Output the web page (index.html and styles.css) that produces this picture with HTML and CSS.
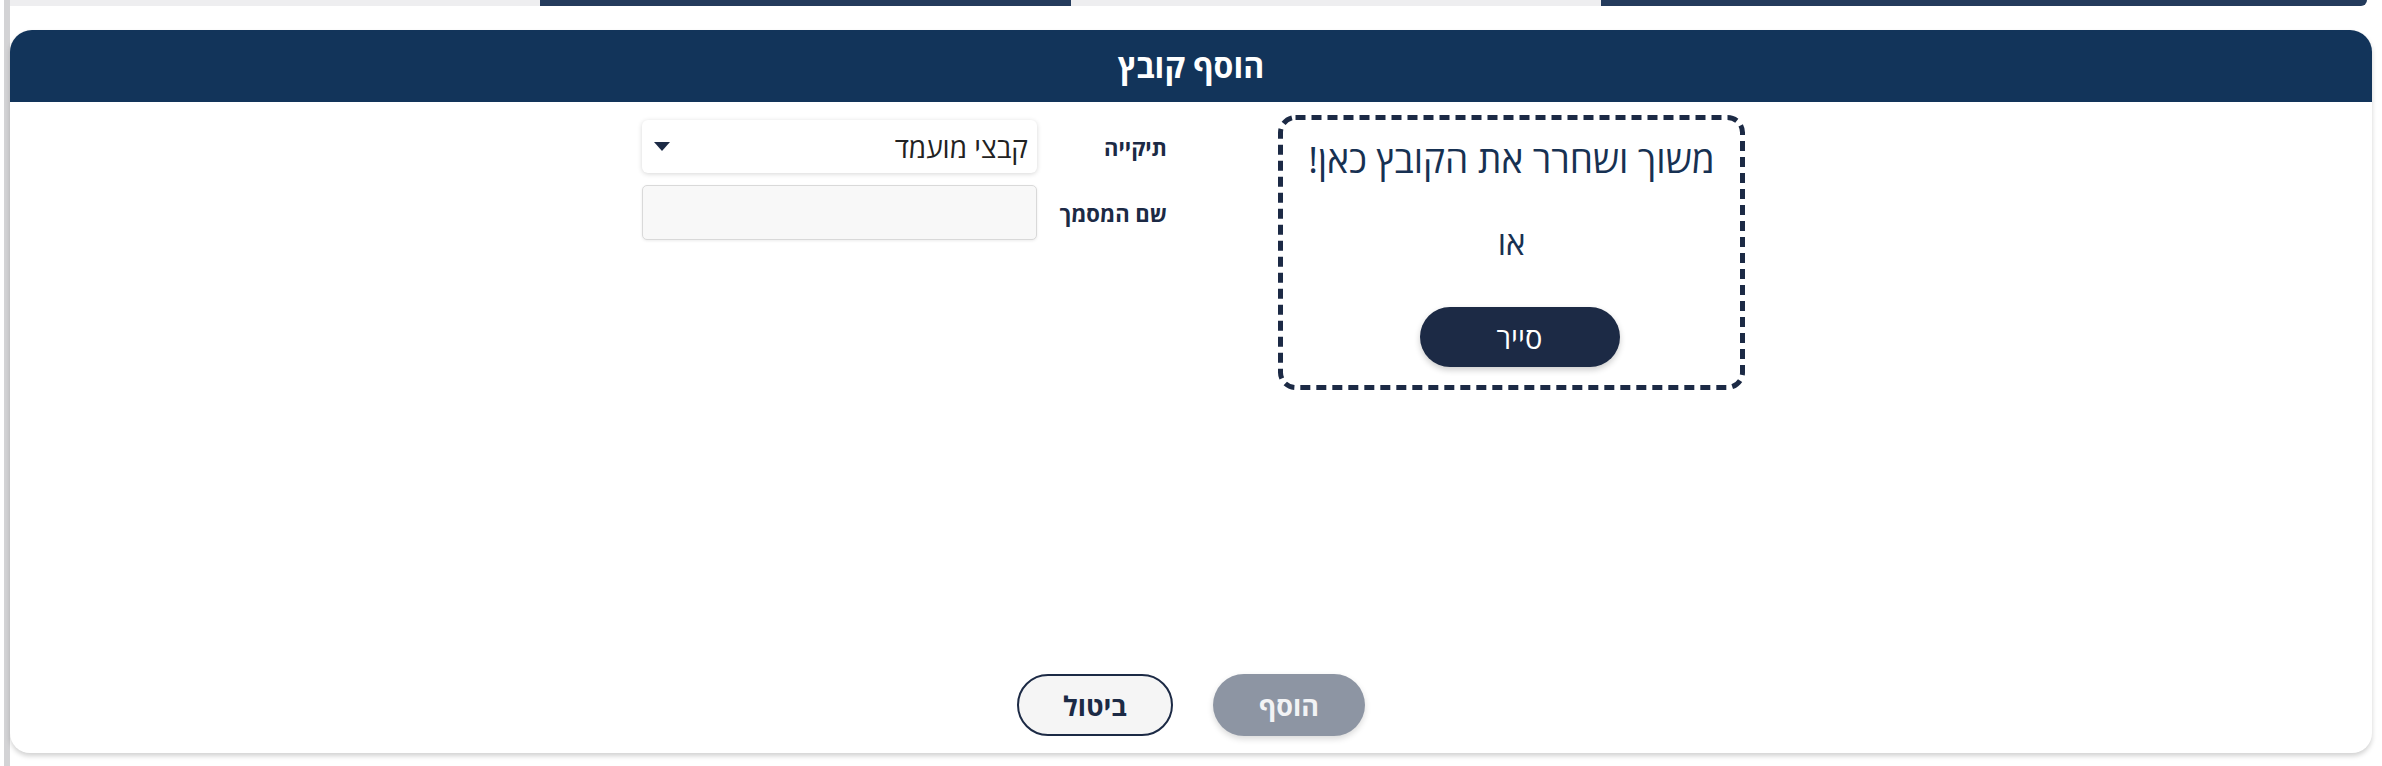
FILE: index.html
```html
<!DOCTYPE html>
<html lang="he">
<head>
<meta charset="utf-8">
<title>הוסף קובץ</title>
<link rel="stylesheet" href="styles.css">
</head>
<body>
<div class="rail"></div>
<div class="main">
  <div class="tabs">
    <span class="tab tab-light"></span>
    <span class="tab tab-dark"></span>
    <span class="tab tab-light"></span>
    <span class="tab tab-dark tab-last"></span>
  </div>
  <div class="card" dir="rtl">
    <div class="card-head"><h1 class="card-title">הוסף קובץ</h1></div>
    <div class="card-body">
      <div class="dropzone">
        <svg class="dz-border" width="467" height="275" viewBox="0 0 467 275" aria-hidden="true">
          <rect x="2.5" y="2.5" width="462" height="270" rx="15" ry="15" fill="none" stroke="#1c2a45" stroke-width="5" stroke-dasharray="10 6"/>
        </svg>
        <p class="dz-title">משוך ושחרר את הקובץ כאן!</p>
        <p class="dz-or">או</p>
        <button class="browse">סייר</button>
      </div>
      <div class="form">
        <label class="label">תיקייה</label>
        <div class="select"><span class="select-text">קבצי מועמד</span><span class="caret"></span></div>
        <label class="label">שם המסמך</label>
        <div class="input"></div>
      </div>
    </div>
    <div class="card-foot">
      <button class="btn btn-primary">הוסף</button>
      <button class="btn btn-secondary">ביטול</button>
    </div>
  </div>
</div>
</body>
</html>
```
FILE: styles.css
```css
html, body {
  margin: 0;
  padding: 0;
  background: #ffffff;
  height: 766px;
  overflow: hidden;
}
body {
  display: flex;
  font-family: "Open Sans", "Liberation Sans", "DejaVu Sans", sans-serif;
}
.rail {
  width: 6px;
  margin-left: 4px;
  background: #d3d3d5;
  flex: none;
}
.main {
  flex: 1;
  display: flex;
  flex-direction: column;
}
.tabs {
  display: flex;
  height: 6px;
  margin-right: 15px;
}
.tab {
  display: block;
  height: 6px;
}
.tab-light { width: 530px; background: #eeeef0; }
.tab-dark { width: 531px; background: #243b5c; }
.tab-last { flex: 1; border-bottom-right-radius: 10px; }

.card {
  margin: 24px 10px 0 0;
  height: 723px;
  background: #ffffff;
  border-radius: 22px 22px 20px 20px;
  box-shadow: 0 3px 5px rgba(0, 0, 0, 0.18);
  display: flex;
  flex-direction: column;
  overflow: hidden;
}
.card-head {
  height: 72px;
  background: #12345a;
  display: flex;
  align-items: center;
  justify-content: center;
}
.card-title {
  margin: 0;
  color: #ffffff;
  font-size: 32px;
  font-weight: 700;
  line-height: 1;
}
.card-body {
  flex: 1;
  display: flex;
  justify-content: center;
  align-items: flex-start;
  gap: 111px;
  padding-top: 13px;
  padding-left: 5px;
}
.dropzone {
  position: relative;
  width: 467px;
  height: 275px;
  box-sizing: border-box;
  display: flex;
  flex-direction: column;
  align-items: center;
  padding-top: 21px;
}
.dz-border {
  position: absolute;
  inset: 0;
}
.dz-title {
  margin: 0;
  font-size: 37px;
  line-height: 46px;
  color: #173152;
  font-weight: 400;
  white-space: nowrap;
}
.dz-or {
  margin: 41px 0 0;
  font-size: 33px;
  line-height: 40px;
  color: #173152;
}
.browse {
  margin-top: 44px;
  margin-left: 16px;
  width: 200px;
  height: 60px;
  border: none;
  border-radius: 30px;
  background: #1c2a45;
  color: #ffffff;
  font-family: inherit;
  font-size: 29px;
  font-weight: 500;
  box-shadow: 0 3px 6px rgba(0, 0, 0, 0.2);
}
.form {
  display: grid;
  grid-template-columns: 130px 395px;
  row-gap: 12px;
  margin-top: 5px;
  align-items: center;
}
.label {
  font-size: 22px;
  font-weight: 700;
  color: #1c2a45;
}
.select {
  height: 53px;
  box-sizing: border-box;
  background: #ffffff;
  border-radius: 6px;
  box-shadow: 0 1px 5px rgba(0, 0, 0, 0.16);
  display: flex;
  align-items: center;
  justify-content: space-between;
  padding: 0 9px 0 12px;
}
.select-text {
  font-size: 28px;
  color: #222222;
}
.caret {
  width: 0;
  height: 0;
  border-left: 8px solid transparent;
  border-right: 8px solid transparent;
  border-top: 9px solid #1c2a45;
}
.input {
  height: 55px;
  box-sizing: border-box;
  background: #f8f8f8;
  border: 1.5px solid #d9d9d9;
  border-radius: 5px;
  box-shadow: 0 1px 3px rgba(0, 0, 0, 0.08);
}
.card-foot {
  display: flex;
  justify-content: center;
  gap: 40px;
  padding-bottom: 17px;
}
.btn {
  height: 62px;
  border-radius: 31px;
  font-family: inherit;
  font-size: 27px;
  font-weight: 700;
  box-sizing: border-box;
}
.btn-primary {
  width: 152px;
  border: none;
  background: #8d95a3;
  color: #f2f3f5;
  box-shadow: 0 3px 6px rgba(0, 0, 0, 0.15);
}
.btn-secondary {
  width: 156px;
  border: 2px solid #1c2a45;
  background: #f5f5f5;
  color: #1c2a45;
}
```
